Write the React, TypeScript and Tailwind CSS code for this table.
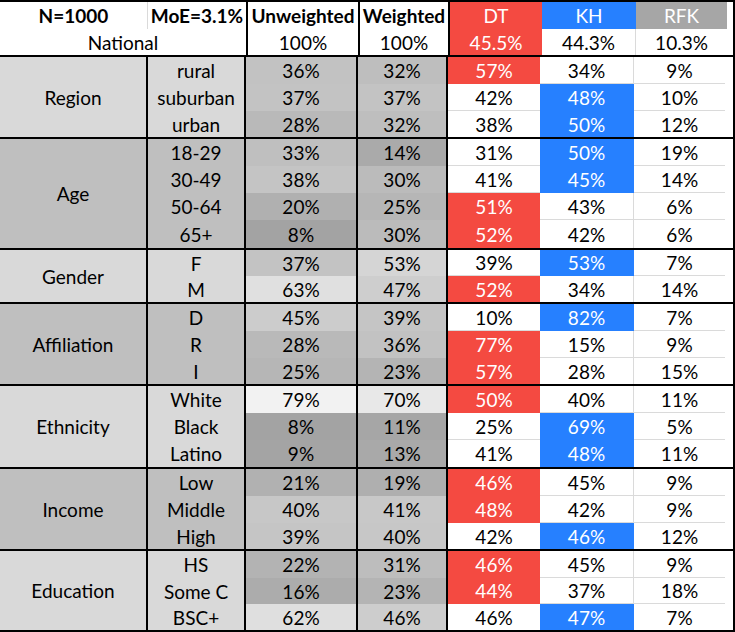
import React from 'react';

type Row = [string, number, number, number, number, number, string];

interface Group {
  label: string;
  tone: string;
  rows: Row[];
}

const groups: Group[] = [
  {
    label: 'Region',
    tone: 'bg-[#d9d9d9]',
    rows: [
      ['rural', 36, 32, 57, 34, 9, 'h-[27px]'],
      ['suburban', 37, 37, 42, 48, 10, 'h-[27px]'],
      ['urban', 28, 32, 38, 50, 12, 'h-[26px]'],
    ],
  },
  {
    label: 'Age',
    tone: 'bg-[#bfbfbf]',
    rows: [
      ['18-29', 33, 14, 31, 50, 19, 'h-[27px]'],
      ['30-49', 38, 30, 41, 45, 14, 'h-[27px]'],
      ['50-64', 20, 25, 51, 43, 6, 'h-[27px]'],
      ['65+', 8, 30, 52, 42, 6, 'h-[28px]'],
    ],
  },
  {
    label: 'Gender',
    tone: 'bg-[#d9d9d9]',
    rows: [
      ['F', 37, 53, 39, 53, 7, 'h-[26px]'],
      ['M', 63, 47, 52, 34, 14, 'h-[26px]'],
    ],
  },
  {
    label: 'Affiliation',
    tone: 'bg-[#bfbfbf]',
    rows: [
      ['D', 45, 39, 10, 82, 7, 'h-[27px]'],
      ['R', 28, 36, 77, 15, 9, 'h-[27px]'],
      ['I', 25, 23, 57, 28, 15, 'h-[26px]'],
    ],
  },
  {
    label: 'Ethnicity',
    tone: 'bg-[#d9d9d9]',
    rows: [
      ['White', 79, 70, 50, 40, 11, 'h-[27px]'],
      ['Black', 8, 11, 25, 69, 5, 'h-[27px]'],
      ['Latino', 9, 13, 41, 48, 11, 'h-[27px]'],
    ],
  },
  {
    label: 'Income',
    tone: 'bg-[#bfbfbf]',
    rows: [
      ['Low', 21, 19, 46, 45, 9, 'h-[27px]'],
      ['Middle', 40, 41, 48, 42, 9, 'h-[27px]'],
      ['High', 39, 40, 42, 46, 12, 'h-[26px]'],
    ],
  },
  {
    label: 'Education',
    tone: 'bg-[#d9d9d9]',
    rows: [
      ['HS', 22, 31, 46, 45, 9, 'h-[27px]'],
      ['Some C', 16, 23, 44, 37, 18, 'h-[26px]'],
      ['BSC+', 62, 46, 46, 47, 7, 'h-[26px]'],
    ],
  },
];

// grey colour scale, darker for smaller shares (8% -> dark, 79% -> near white)
const shade = (v: number) => {
  const g = Math.round(163 + (v - 8) * 1.11);
  return `rgb(${g}, ${g}, ${g})`;
};

const CELL = 'flex items-center justify-center pt-[2px]';
const RED = 'bg-[#f44a41] border-[#f44a41] text-white';
const BLUE = 'bg-[#2680ff] border-[#2680ff] text-white';
const PLAIN = 'bg-white border-[#dadada] text-black';

function GroupBlock({ group }: { group: Group }) {
  const last = group.rows.length - 1;
  return (
    <div className="flex border-t-2 border-black">
      <div className={`w-[148px] border-r-2 border-black ${CELL} ${group.tone}`}>{group.label}</div>
      <div className={`w-[98px] flex flex-col border-r-2 border-black ${group.tone}`}>
        {group.rows.map((r) => (
          <div key={r[0]} className={`${r[6]} ${CELL}`}>
            {r[0]}
          </div>
        ))}
      </div>
      <div className="w-[112px] flex flex-col border-r-2 border-black">
        {group.rows.map((r) => (
          <div key={r[0]} className={`${r[6]} ${CELL}`} style={{ backgroundColor: shade(r[1]) }}>
            {r[1]}%
          </div>
        ))}
      </div>
      <div className="w-[90px] flex flex-col border-r-2 border-black">
        {group.rows.map((r) => (
          <div key={r[0]} className={`${r[6]} ${CELL}`} style={{ backgroundColor: shade(r[2]) }}>
            {r[2]}%
          </div>
        ))}
      </div>
      <div className="w-[92px] flex flex-col">
        {group.rows.map((r, i) => (
          <div key={r[0]} className={`${r[6]} ${CELL} ${i < last ? 'border-b' : ''} ${r[3] > r[4] ? RED : PLAIN}`}>
            {r[3]}%
          </div>
        ))}
      </div>
      <div className="w-[94px] flex flex-col">
        {group.rows.map((r, i) => (
          <div
            key={r[0]}
            className={`${r[6]} ${CELL} border-r ${i < last ? 'border-b' : ''} ${r[4] > r[3] ? BLUE : PLAIN}`}
          >
            {r[4]}%
          </div>
        ))}
      </div>
      <div className="w-[91px] flex flex-col">
        {group.rows.map((r, i) => (
          <div key={r[0]} className={`${r[6]} ${CELL} ${i < last ? 'border-b' : ''} ${PLAIN}`}>
            {r[5]}%
          </div>
        ))}
      </div>
    </div>
  );
}

export default function App() {
  return (
    <div className="w-[735px] h-[632px] bg-white border-r-2 border-b-2 border-black font-[Lato,sans-serif] text-[19px] text-black">
      {/* Header */}
      <div className="flex border-t-2 border-black">
        <div className="w-[248px] flex flex-col border-r-2 border-black">
          <div className="h-[27px] flex">
            <div className={`w-[149px] border-r border-[#dadada] font-bold ${CELL}`}>N=1000</div>
            <div className={`w-[99px] font-bold ${CELL}`}>MoE=3.1%</div>
          </div>
          <div className={`h-[26px] ${CELL}`}>National</div>
        </div>
        <div className="w-[112px] flex flex-col border-r-2 border-black">
          <div className={`h-[27px] font-bold ${CELL}`}>Unweighted</div>
          <div className={`h-[26px] ${CELL}`}>100%</div>
        </div>
        <div className="w-[90px] flex flex-col border-r-2 border-black">
          <div className={`h-[27px] font-bold ${CELL}`}>Weighted</div>
          <div className={`h-[26px] ${CELL}`}>100%</div>
        </div>
        <div className="w-[92px] flex flex-col bg-[#f44a41] text-white">
          <div className={`h-[27px] ${CELL}`}>DT</div>
          <div className={`h-[26px] ${CELL}`}>45.5%</div>
        </div>
        <div className="w-[94px] flex flex-col">
          <div className={`h-[27px] bg-[#2680ff] text-white ${CELL}`}>KH</div>
          <div className={`h-[26px] border-r border-[#dadada] ${CELL}`}>44.3%</div>
        </div>
        <div className="w-[91px] flex flex-col">
          <div className={`h-[27px] bg-[#a6a6a6] text-white ${CELL}`}>RFK</div>
          <div className={`h-[26px] ${CELL}`}>10.3%</div>
        </div>
      </div>

      {groups.map((g) => (
        <GroupBlock key={g.label} group={g} />
      ))}
    </div>
  );
}
